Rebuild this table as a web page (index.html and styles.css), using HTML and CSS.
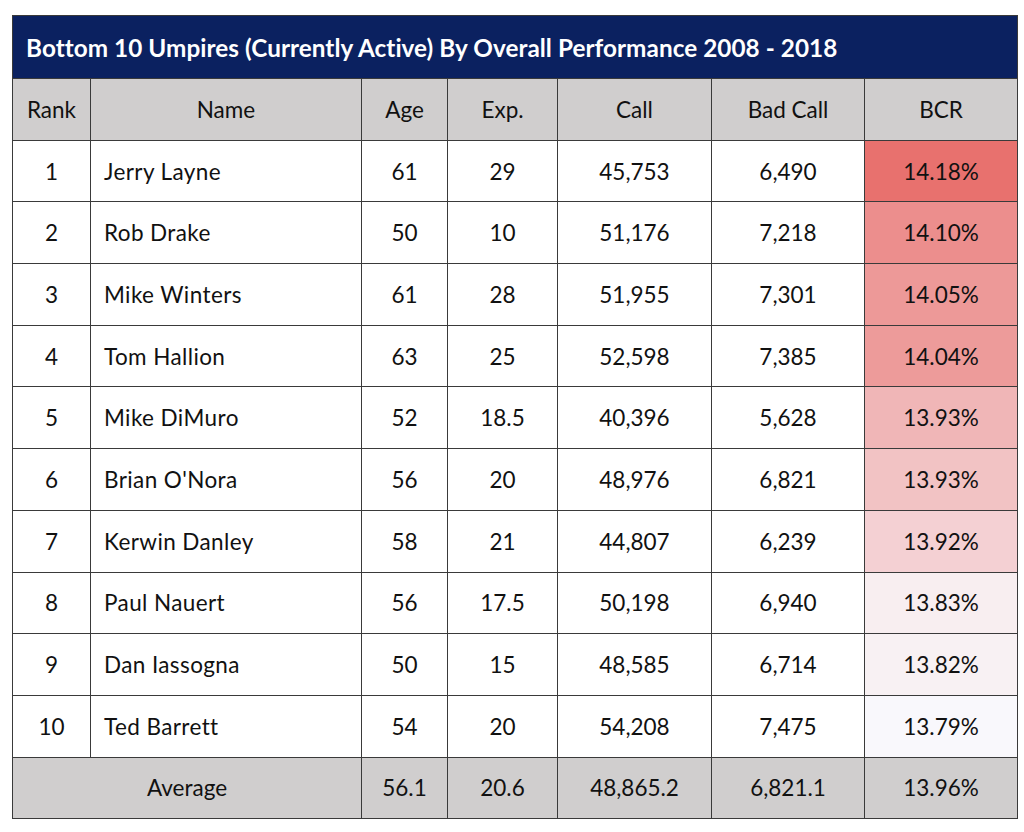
FILE: index.html
```html
<!DOCTYPE html>
<html>
<head>
<meta charset="utf-8">
<link rel="stylesheet" href="styles.css">
</head>
<body>
<table class="ump">
  <colgroup>
    <col class="c-rank"><col class="c-name"><col class="c-age"><col class="c-exp"><col class="c-call"><col class="c-bad"><col class="c-bcr">
  </colgroup>
  <thead>
    <tr><th colspan="7" class="title">Bottom 10 Umpires (Currently Active) By Overall Performance 2008 - 2018</th></tr>
    <tr class="head"><th>Rank</th><th>Name</th><th>Age</th><th>Exp.</th><th>Call</th><th>Bad Call</th><th>BCR</th></tr>
  </thead>
  <tbody>
    <tr><td>1</td><td class="name">Jerry Layne</td><td>61</td><td>29</td><td>45,753</td><td>6,490</td><td class="b1">14.18%</td></tr>
    <tr><td>2</td><td class="name">Rob Drake</td><td>50</td><td>10</td><td>51,176</td><td>7,218</td><td class="b2">14.10%</td></tr>
    <tr><td>3</td><td class="name">Mike Winters</td><td>61</td><td>28</td><td>51,955</td><td>7,301</td><td class="b3">14.05%</td></tr>
    <tr><td>4</td><td class="name">Tom Hallion</td><td>63</td><td>25</td><td>52,598</td><td>7,385</td><td class="b4">14.04%</td></tr>
    <tr><td>5</td><td class="name">Mike DiMuro</td><td>52</td><td>18.5</td><td>40,396</td><td>5,628</td><td class="b5">13.93%</td></tr>
    <tr><td>6</td><td class="name">Brian O'Nora</td><td>56</td><td>20</td><td>48,976</td><td>6,821</td><td class="b6">13.93%</td></tr>
    <tr><td>7</td><td class="name">Kerwin Danley</td><td>58</td><td>21</td><td>44,807</td><td>6,239</td><td class="b7">13.92%</td></tr>
    <tr><td>8</td><td class="name">Paul Nauert</td><td>56</td><td>17.5</td><td>50,198</td><td>6,940</td><td class="b8">13.83%</td></tr>
    <tr><td>9</td><td class="name">Dan Iassogna</td><td>50</td><td>15</td><td>48,585</td><td>6,714</td><td class="b9">13.82%</td></tr>
    <tr><td>10</td><td class="name">Ted Barrett</td><td>54</td><td>20</td><td>54,208</td><td>7,475</td><td class="b10">13.79%</td></tr>
  </tbody>
  <tfoot>
    <tr class="avg"><td colspan="2">Average</td><td>56.1</td><td>20.6</td><td>48,865.2</td><td>6,821.1</td><td>13.96%</td></tr>
  </tfoot>
</table>
</body>
</html>
```

FILE: styles.css
```css
html, body {
  margin: 0;
  padding: 0;
  background: #ffffff;
}
body {
  padding: 15px 0 0 12px;
  font-family: Lato, "Open Sans", "Liberation Sans", sans-serif;
  color: #111;
}
.ump {
  border-collapse: collapse;
  table-layout: fixed;
  width: 1005px;
  border: 1px solid #3a3a3a;
}
.c-rank { width: 78px; }
.c-name { width: 271px; }
.c-age { width: 86px; }
.c-exp { width: 110px; }
.c-call { width: 154px; }
.c-bad { width: 153px; }
.c-bcr { width: 153px; }

.ump th, .ump td {
  border: 1px solid #3a3a3a;
  height: 60.7px;
  padding: 0;
  text-align: center;
  font-size: 22.5px;
  font-weight: 400;
  vertical-align: middle;
}
.ump th.title {
  background: #0b2160;
  color: #ffffff;
  font-weight: 700;
  text-align: left;
  padding-left: 13px;
  font-size: 24.3px;
  letter-spacing: 0.05px;
  height: 62px;
}
.head th {
  background: #d0cece;
}
.ump td.name {
  text-align: left;
  padding-left: 13px;
  letter-spacing: 0.4px;
}
.avg td {
  background: #d0cece;
}
.b1 { background: #e8716e; }
.b2 { background: #ec8e8d; }
.b3 { background: #ed9998; }
.b4 { background: #ed9b9a; }
.b5 { background: #f0b6b7; }
.b6 { background: #f2c3c4; }
.b7 { background: #f4d0d3; }
.b8 { background: #f8eef0; }
.b9 { background: #f8f1f3; }
.b10 { background: #f9f8fc; }
```
